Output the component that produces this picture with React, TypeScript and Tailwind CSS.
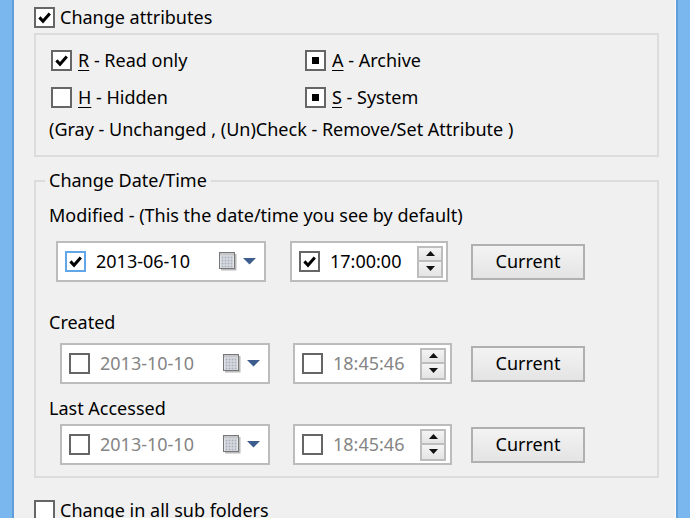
import React from "react";

type BoxState = "on" | "off" | "mixed";

function Box({ state, focus = false }: { state: BoxState; focus?: boolean }) {
  return (
    <span
      className={
        focus
          ? "flex h-[21px] w-[21px] shrink-0 items-center justify-center border-2 border-[#62a6ea] bg-white"
          : "flex h-[21px] w-[21px] shrink-0 items-center justify-center border-2 border-[#666666] bg-white"
      }
    >
      {state === "on" && (
        <svg width="15" height="15" viewBox="0 0 15 15">
          <path d="M2.4 7.4 L6 11.2 L12.8 3.4" fill="none" stroke="#000" strokeWidth="3" />
        </svg>
      )}
      {state === "mixed" && <span className="h-[7px] w-[7px] bg-black" />}
    </span>
  );
}

function U({ children }: { children: React.ReactNode }) {
  return <span className="underline decoration-1 underline-offset-[3px]">{children}</span>;
}

function CalIcon() {
  const cells: React.ReactNode[] = [];
  for (let r = 0; r < 4; r++) {
    for (let c = 0; c < 4; c++) {
      cells.push(<rect key={`${r}-${c}`} x={2.5 + c * 3} y={4.5 + r * 3} width="2" height="2" fill="#a9b1bd" />);
    }
  }
  return (
    <svg width="18" height="19" viewBox="0 0 18 19">
      <rect x="2" y="2" width="15.5" height="16.5" fill="#8a8a8a" opacity="0.6" />
      <rect x="0.5" y="0.5" width="15" height="16" fill="#e2e4e8" stroke="#777" />
      <rect x="1" y="1" width="14" height="2.5" fill="#c4c6ca" />
      {cells}
    </svg>
  );
}

function DropArrow() {
  return (
    <svg width="13" height="7" viewBox="0 0 13 7">
      <polygon points="0,0 13,0 6.5,6.5" fill="#3d5d8e" />
    </svg>
  );
}

function DatePicker({
  date,
  state,
  disabled = false,
  focus = false,
}: {
  date: string;
  state: BoxState;
  disabled?: boolean;
  focus?: boolean;
}) {
  return (
    <div className="flex h-[41px] w-[210px] shrink-0 items-center border-2 border-[#bcbcbc] bg-white pl-[7px] pr-[8px]">
      <Box state={state} focus={focus} />
      <span className={disabled ? "ml-[10px] text-[#858585]" : "ml-[10px] text-black"}>{date}</span>
      <span className="ml-auto flex items-center">
        <CalIcon />
      </span>
      <span className="ml-[6px] flex items-center">
        <DropArrow />
      </span>
    </div>
  );
}

function Spin() {
  return (
    <div className="flex flex-col gap-0">
      <div className="flex h-[16px] w-[26px] items-center justify-center border-2 border-[#bdbdbd] bg-gradient-to-b from-[#f4f4f4] to-[#e4e4e4]">
        <svg width="9" height="5" viewBox="0 0 9 5">
          <polygon points="4.5,0 9,5 0,5" fill="#111" />
        </svg>
      </div>
      <div className="flex h-[16px] w-[26px] items-center justify-center border-2 border-t-0 border-[#bdbdbd] bg-gradient-to-b from-[#f4f4f4] to-[#e4e4e4]">
        <svg width="9" height="5" viewBox="0 0 9 5">
          <polygon points="0,0 9,0 4.5,5" fill="#111" />
        </svg>
      </div>
    </div>
  );
}

function TimePicker({
  time,
  state,
  disabled = false,
  wide = false,
}: {
  time: string;
  state: BoxState;
  disabled?: boolean;
  wide?: boolean;
}) {
  return (
    <div
      className={
        wide
          ? "flex h-[41px] w-[159px] shrink-0 items-center border-2 border-[#bcbcbc] bg-white pl-[7px] pr-[4px]"
          : "flex h-[41px] w-[158px] shrink-0 items-center border-2 border-[#bcbcbc] bg-white pl-[7px] pr-[3px]"
      }
    >
      <Box state={state} />
      <span className={disabled ? "ml-[10px] text-[#858585]" : "ml-[10px] text-black"}>{time}</span>
      <span className="ml-auto">
        <Spin />
      </span>
    </div>
  );
}

function CurrentButton() {
  return (
    <button className="flex h-[36px] w-[114px] shrink-0 items-center justify-center border-2 border-[#b0b0b0] bg-gradient-to-b from-[#f3f3f3] to-[#e4e4e4] text-black">
      Current
    </button>
  );
}

export default function App() {
  return (
    <div className="flex h-[518px] w-[690px] overflow-hidden bg-[#f0f0f0] font-['Noto_Sans',sans-serif] text-[18px] leading-[21px] text-black">
      <div className="w-[12px] shrink-0 bg-[#7ab7ef]" />
      <div className="w-[2px] shrink-0 bg-[#5f9ddb]" />
      <div className="flex-1 pl-[20px] pr-[16px] pt-[7px]">
        <label className="flex h-[21px] items-center gap-[5px]">
          <Box state="on" />
          <span>Change attributes</span>
        </label>

        <div className="mt-[5px] h-[124px] border-2 border-[#dcdcdc] pl-[13px] pt-[15px]">
          <div className="grid grid-cols-[254px_auto] gap-y-[16px] pl-[2px]">
            <div className="flex items-center gap-[6px]">
              <Box state="on" />
              <span>
                <U>R</U> - Read only
              </span>
            </div>
            <div className="flex items-center gap-[6px]">
              <Box state="mixed" />
              <span>
                <U>A</U> - Archive
              </span>
            </div>
            <div className="flex items-center gap-[6px]">
              <Box state="off" />
              <span>
                <U>H</U> - Hidden
              </span>
            </div>
            <div className="flex items-center gap-[6px]">
              <Box state="mixed" />
              <span>
                <U>S</U> - System
              </span>
            </div>
          </div>
          <div className="mt-[11px]">(Gray - Unchanged , (Un)Check - Remove/Set Attribute )</div>
        </div>

        <fieldset className="mt-[13px] border-2 border-[#dcdcdc] pb-[11px] pl-[13px]">
          <legend className="-ml-[4px] px-[4px]">Change Date/Time</legend>
          <div className="mt-[14px]">Modified - (This the date/time you see by default)</div>
          <div className="mt-[15px] flex items-center pl-[7px]">
            <DatePicker date="2013-06-10" state="on" focus />
            <div className="ml-[24px]">
              <TimePicker time="17:00:00" state="on" />
            </div>
            <div className="ml-[23px]">
              <CurrentButton />
            </div>
          </div>

          <div className="mt-[30px]">Created</div>
          <div className="mt-[10px] flex items-center pl-[11px]">
            <DatePicker date="2013-10-10" state="off" disabled />
            <div className="ml-[23px]">
              <TimePicker time="18:45:46" state="off" disabled wide />
            </div>
            <div className="ml-[19px]">
              <CurrentButton />
            </div>
          </div>

          <div className="mt-[14px]">Last Accessed</div>
          <div className="mt-[5px] flex items-center pl-[11px]">
            <DatePicker date="2013-10-10" state="off" disabled />
            <div className="ml-[23px]">
              <TimePicker time="18:45:46" state="off" disabled wide />
            </div>
            <div className="ml-[19px]">
              <CurrentButton />
            </div>
          </div>
        </fieldset>

        <label className="mt-[22px] flex h-[21px] items-center gap-[5px]">
          <Box state="off" />
          <span>Change in all sub folders</span>
        </label>
      </div>
      <div className="w-[1px] shrink-0 bg-[#fafafa]" />
      <div className="w-[2px] shrink-0 bg-[#5f9ddb]" />
      <div className="w-[12px] shrink-0 bg-[#7ab7ef]" />
    </div>
  );
}
